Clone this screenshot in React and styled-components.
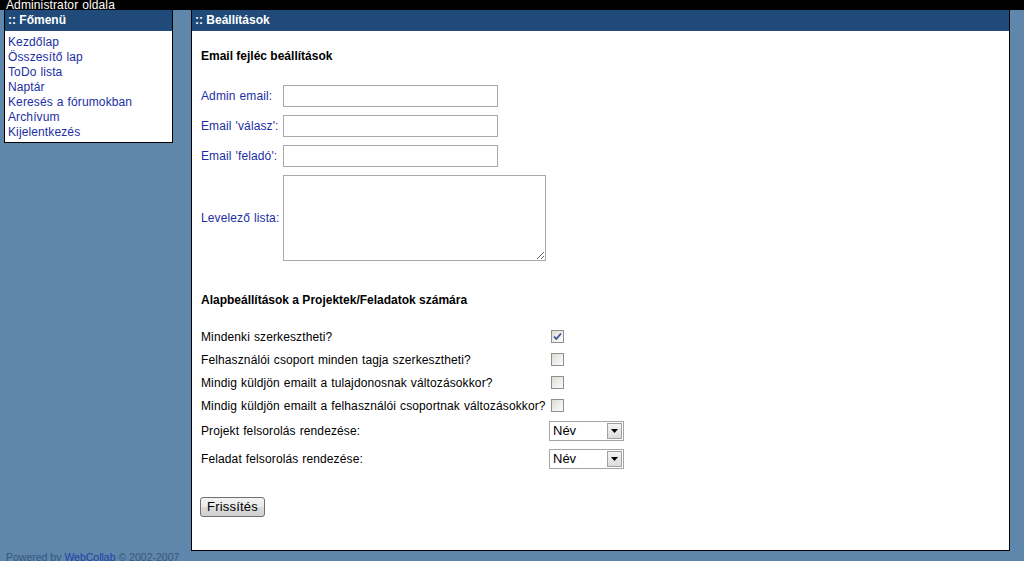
import React from 'react';
import styled, { createGlobalStyle } from 'styled-components';

const COLOURS = {
  page: '#5f86ab',
  header: '#1f4a7a',
  link: '#1c2ea3',
  footer: '#36577f',
};

const GlobalStyle = createGlobalStyle`
  body {
    margin: 0;
    background: ${COLOURS.page};
    font-family: "Liberation Sans", Arial, sans-serif;
    font-size: 12px;
    letter-spacing: 0.12px;
    word-spacing: 0.5px;
    color: #000;
  }
`;

const STopBar = styled.div`
  height: 10px;
  line-height: 11px;
  background: #000;
  color: #fff;
  font-size: 12px;
  padding-left: 6px;
  white-space: nowrap;
  position: relative;
  z-index: 2;
`;

const SColumns = styled.div`
  display: flex;
  align-items: flex-start;
  gap: 18px;
  padding-left: 4px;
`;

const SBox = styled.div`
  width: ${(p) => p.$width}px;
  border: 1px solid #000;
  border-top: none;
  background: #fff;
  box-sizing: border-box;
`;

const SBoxHeader = styled.div`
  height: 21px;
  line-height: 20px;
  background: ${COLOURS.header};
  color: #fff;
  font-weight: bold;
  font-size: 12px;
  letter-spacing: 0;
  word-spacing: 0;
  padding-left: 3px;
`;

const SMenu = styled.ul`
  list-style: none;
  margin: 0;
  padding: 4px 3px 2px;
`;

const SMenuLink = styled.a`
  display: block;
  line-height: 15px;
  color: ${COLOURS.link};
  text-decoration: none;
`;

const SContent = styled.div`
  padding: 18px 9px 33px;
`;

const SSectionTitle = styled.div`
  font-weight: bold;
  line-height: 15px;
  letter-spacing: 0;
  word-spacing: 0;
`;

const SFieldGrid = styled.div`
  display: grid;
  grid-template-columns: 82px auto;
  row-gap: 8px;
  align-items: center;
  justify-items: start;
  margin: 21px 0 32px;
`;

const SFieldLabel = styled.label`
  color: ${COLOURS.link};
`;

const STextInput = styled.input`
  box-sizing: border-box;
  width: 215px;
  height: 22px;
  border: 1px solid #a9a9a9;
  padding: 1px 2px;
  margin: 0;
  font: inherit;
`;

const STextArea = styled.textarea`
  box-sizing: border-box;
  width: 263px;
  height: 86px;
  border: 1px solid #a9a9a9;
  margin: 0;
  font: inherit;
`;

const SOptionGrid = styled.div`
  display: grid;
  grid-template-columns: 348px auto;
  grid-auto-rows: ${(p) => p.$row}px;
  align-items: center;
  justify-items: start;
  margin-top: ${(p) => p.$top || 0}px;
`;

const SCheckBox = styled.span`
  box-sizing: border-box;
  width: 13px;
  height: 13px;
  margin-left: 2px;
  border: 1px solid #8f8f8f;
  background: linear-gradient(135deg, #dcdcd7 0%, #f0f0ec 60%, #fbfbf9 100%);
  display: flex;
  align-items: center;
  justify-content: center;
`;

const SSelect = styled.div`
  box-sizing: border-box;
  width: 75px;
  height: 20px;
  border: 1px solid #a5a5a5;
  display: flex;
  align-items: stretch;
  padding: 1px;
  background: #fff;
`;

const SSelectValue = styled.span`
  flex: 1;
  line-height: 16px;
  padding-left: 2px;
  font-size: 13px;
  letter-spacing: 0;
  color: #000;
`;

const SSelectArrow = styled.span`
  box-sizing: border-box;
  width: 15px;
  border: 1px solid #a0a0a0;
  background: linear-gradient(#f4f4f4, #dcdcdc);
  display: flex;
  align-items: center;
  justify-content: center;
`;

const SButton = styled.button`
  margin: 24px 0 0 -1px;
  height: 20px;
  padding: 0 6px;
  font-family: inherit;
  font-size: 13px;
  letter-spacing: 0.2px;
  color: #000;
  border: 1px solid #707070;
  border-radius: 3px;
  background: linear-gradient(#f2f2f2 0%, #ebebeb 50%, #dddddd 51%, #cfcfcf 100%);
  line-height: 16px;
`;

const SFooter = styled.div`
  padding: 1px 0 0 6px;
  line-height: 10px;
  font-size: 10.5px;
  letter-spacing: 0;
  word-spacing: 0;
  color: ${COLOURS.footer};
  white-space: nowrap;
`;

const SFooterLink = styled.a`
  color: #1d3fa6;
  text-decoration: none;
`;

const menuItems = [
  'Kezdőlap',
  'Összesítő lap',
  'ToDo lista',
  'Naptár',
  'Keresés a fórumokban',
  'Archívum',
  'Kijelentkezés',
];

const checkOptions = [
  { label: 'Mindenki szerkesztheti?', checked: true },
  { label: 'Felhasználói csoport minden tagja szerkesztheti?', checked: false },
  { label: 'Mindig küldjön emailt a tulajdonosnak változásokkor?', checked: false },
  { label: 'Mindig küldjön emailt a felhasználói csoportnak változásokkor?', checked: false },
];

const CheckBox = ({ checked }) => (
  <SCheckBox>
    {checked && (
      <svg width="9" height="9" viewBox="0 0 9 9">
        <path d="M1 4.5 L3.3 7 L8 1.5" fill="none" stroke="#3b4f9a" strokeWidth="1.8" />
      </svg>
    )}
  </SCheckBox>
);

const Select = ({ value }) => (
  <SSelect>
    <SSelectValue>{value}</SSelectValue>
    <SSelectArrow>
      <svg width="7" height="4" viewBox="0 0 7 4">
        <path d="M0 0 H7 L3.5 4 Z" fill="#000" />
      </svg>
    </SSelectArrow>
  </SSelect>
);

const App = () => (
  <>
    <GlobalStyle />
    <STopBar>Administrator oldala</STopBar>
    <SColumns>
      <SBox $width={169}>
        <SBoxHeader>:: Főmenü</SBoxHeader>
        <SMenu>
          {menuItems.map((item) => (
            <li key={item}>
              <SMenuLink href="#">{item}</SMenuLink>
            </li>
          ))}
        </SMenu>
      </SBox>
      <SBox $width={819}>
        <SBoxHeader>:: Beállítások</SBoxHeader>
        <SContent>
          <SSectionTitle>Email fejléc beállítások</SSectionTitle>
          <SFieldGrid>
            <SFieldLabel>Admin email:</SFieldLabel>
            <STextInput />
            <SFieldLabel>Email 'válasz':</SFieldLabel>
            <STextInput />
            <SFieldLabel>Email 'feladó':</SFieldLabel>
            <STextInput />
            <SFieldLabel>Levelező lista:</SFieldLabel>
            <STextArea />
          </SFieldGrid>
          <SSectionTitle>Alapbeállítások a Projektek/Feladatok számára</SSectionTitle>
          <SOptionGrid $row={23} $top={17}>
            {checkOptions.map((opt) => (
              <React.Fragment key={opt.label}>
                <span>{opt.label}</span>
                <CheckBox checked={opt.checked} />
              </React.Fragment>
            ))}
          </SOptionGrid>
          <SOptionGrid $row={28}>
            <span>Projekt felsorolás rendezése:</span>
            <Select value="Név" />
            <span>Feladat felsorolás rendezése:</span>
            <Select value="Név" />
          </SOptionGrid>
          <SButton>Frissítés</SButton>
        </SContent>
      </SBox>
    </SColumns>
    <SFooter>
      Powered by <SFooterLink href="#">WebCollab</SFooterLink> © 2002-2007
    </SFooter>
  </>
);

export default App;
